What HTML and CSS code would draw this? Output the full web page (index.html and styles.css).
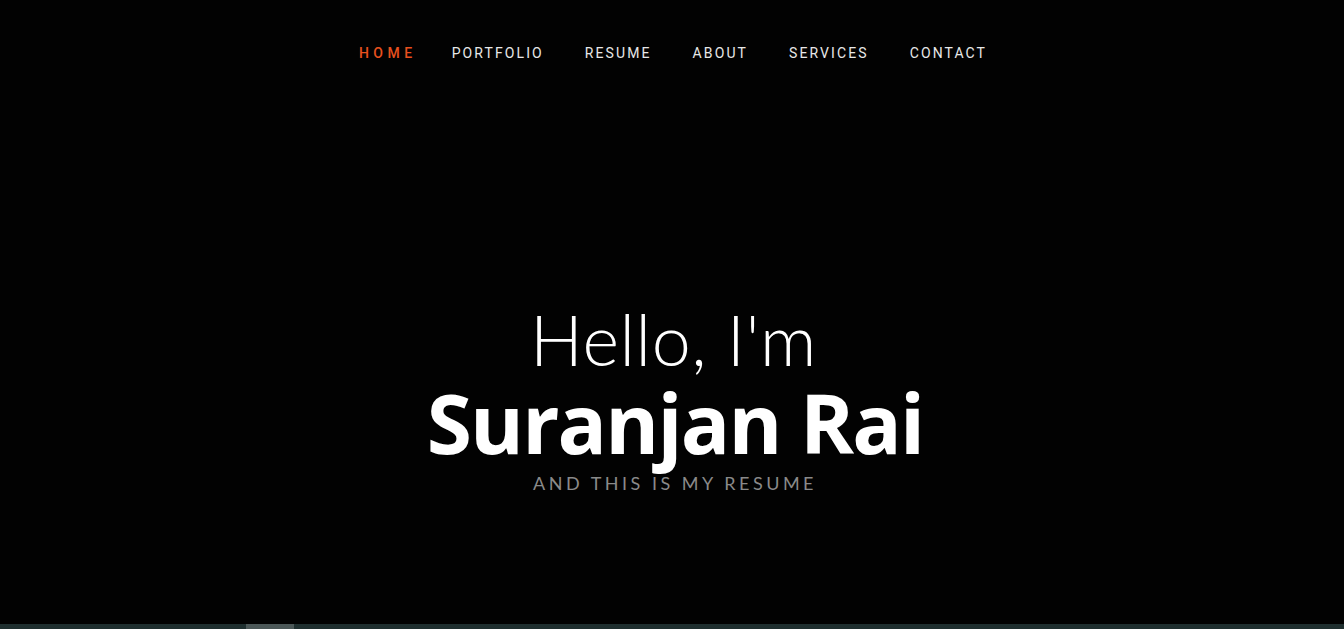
FILE: index.html
```html
<!DOCTYPE html>
<html>
<head>
<meta charset="utf-8">
<link rel="stylesheet" href="styles.css">
</head>
<body>
<div class="page">
  <nav class="nav">
    <a class="nav-link active">HOME</a>
    <a class="nav-link">PORTFOLIO</a>
    <a class="nav-link">RESUME</a>
    <a class="nav-link">ABOUT</a>
    <a class="nav-link">SERVICES</a>
    <a class="nav-link">CONTACT</a>
  </nav>
  <main class="hero">
    <h1 class="hello">Hello, I'm</h1>
    <h2 class="name">Suranjan Rai</h2>
    <p class="tagline">AND THIS IS MY RESUME</p>
  </main>
  <div class="scrollbar"><div class="thumb"></div></div>
</div>
</body>
</html>
```
FILE: styles.css
```css
html, body {
  margin: 0;
  padding: 0;
  background: #020202;
}
.page {
  height: 629px;
  display: flex;
  flex-direction: column;
  overflow: hidden;
}
.nav {
  display: flex;
  justify-content: center;
  gap: 41px;
  padding-top: 44px;
  height: 20px;
  padding-left: 2px;
}
.nav-link {
  font-family: Roboto, "Liberation Sans", sans-serif;
  font-size: 14px;
  letter-spacing: 2.1px;
  color: #e8e8e8;
  line-height: 18px;
}
.nav-link.active {
  color: #e8501e;
  font-weight: 500;
  letter-spacing: 4.5px;
  margin-right: -6px;
}
.hero {
  flex: 1;
  display: flex;
  flex-direction: column;
  align-items: center;
  padding-top: 235px;
}
.hello {
  margin: 0;
  padding-left: 3px;
  font-family: Lato, "Noto Sans", sans-serif;
  font-weight: 300;
  font-size: 70px;
  letter-spacing: 0.6px;
  line-height: 80px;
  color: #ffffff;
}
.name {
  margin: 0;
  padding-left: 6px;
  font-family: "Open Sans", Lato, sans-serif;
  font-weight: 700;
  font-size: 82px;
  letter-spacing: -1.8px;
  line-height: 86px;
  color: #ffffff;
}
.tagline {
  margin: 7px 0 0;
  padding-left: 6px;
  font-family: Lato, "Noto Sans", sans-serif;
  font-size: 18px;
  letter-spacing: 3.5px;
  color: #8a8a8a;
  line-height: 22px;
}
.scrollbar {
  height: 5px;
  background: #1f2f2f;
  position: relative;
}
.thumb {
  position: absolute;
  left: 246px;
  width: 48px;
  top: 0;
  bottom: 0;
  background: #4b5757;
}
```
